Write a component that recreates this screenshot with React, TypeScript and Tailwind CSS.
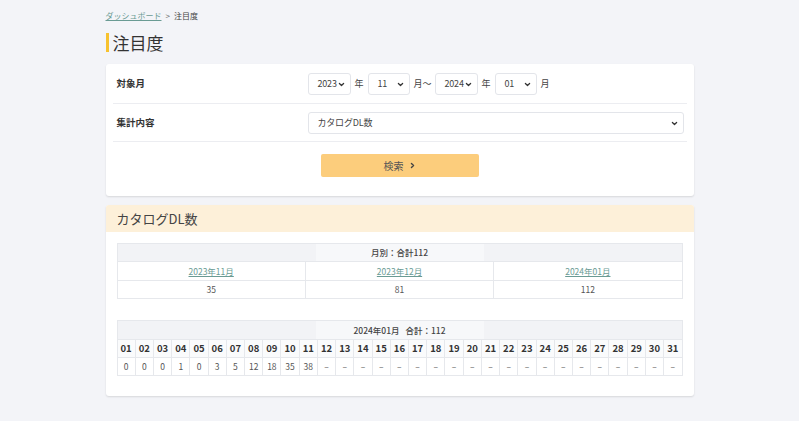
import React from 'react';

const days = Array.from({ length: 31 }, (_, i) => String(i + 1).padStart(2, '0'));
const values = ['0', '0', '0', '1', '0', '3', '5', '12', '18', '35', '38'];

function Chevron({ className = '' }: { className?: string }) {
  return (
    <svg viewBox="0 0 10 10" className={`pointer-events-none absolute w-[7px] h-[7px] ${className}`}>
      <path d="M2 3.5 L5 6.5 L8 3.5" fill="none" stroke="#333" strokeWidth="1.8" strokeLinecap="round" strokeLinejoin="round" />
    </svg>
  );
}

function Select({ value, className = '' }: { value: string; className?: string }) {
  return (
    <div className={`relative shrink-0 h-[22px] rounded-[3px] border border-[#e3e5ea] bg-white flex items-center pl-[9px] text-[9px] tracking-[-0.2px] text-[#444] ${className}`}>
      <span>{value}</span>
      <Chevron className="right-[5px] top-[7px]" />
    </div>
  );
}

export default function App() {
  return (
    <div className="min-h-[421px] bg-[#f3f4f8] text-[#333]" style={{ fontFamily: '"Noto Sans CJK JP", "Noto Sans", sans-serif' }}>
      <div className="mx-auto w-[588px] pt-[9px] pb-[26px]">
        {/* Breadcrumb */}
        <div className="text-[8px] leading-[14px] flex items-center gap-[4px]">
          <a className="text-[#6a9b94] underline">ダッシュボード</a>
          <span className="text-[#666]">&gt;</span>
          <span className="text-[#444]">注目度</span>
        </div>

        {/* Title */}
        <div className="mt-[9px] flex items-center h-[20px]">
          <div className="w-[3px] h-[19px] bg-[#f7c22f]" />
          <h1 className="ml-[4px] text-[17px] leading-none text-[#333]">注目度</h1>
        </div>

        {/* Search card */}
        <div className="mt-[12px] bg-white rounded-[3px] shadow-[0_1px_2px_rgba(0,0,0,0.12)] px-[7px] pb-[19px]">
          <div className="flex items-center h-[40px] border-b border-[#ecedf1]">
            <div className="w-[195px] shrink-0 pl-[4px] text-[9.5px] font-bold">対象月</div>
            <div className="flex items-center text-[9px] text-[#444]">
              <Select value="2023" className="w-[43px]" />
              <span className="ml-[4px] mr-[4px]">年</span>
              <Select value="11" className="w-[42px]" />
              <span className="ml-[4px] mr-[3px]">月〜</span>
              <Select value="2024" className="w-[43px]" />
              <span className="ml-[4px] mr-[4px]">年</span>
              <Select value="01" className="w-[42px]" />
              <span className="ml-[4px]">月</span>
            </div>
          </div>
          <div className="flex items-center h-[38px] border-b border-[#ecedf1]">
            <div className="w-[195px] shrink-0 pl-[4px] text-[9.5px] font-bold">集計内容</div>
            <Select value="カタログDL数" className="w-[376px] h-[21px]" />
          </div>
          <div className="pt-[12px] pl-[208px]">
            <button className="w-[158px] h-[23px] rounded-[2px] bg-[#fccd7c] flex items-center justify-center gap-[5px] text-[10px] text-[#555]">
              <span>検索</span>
              <svg viewBox="0 0 10 10" className="w-[7px] h-[7px]">
                <path d="M3.5 2 L6.5 5 L3.5 8" fill="none" stroke="#444" strokeWidth="2" strokeLinecap="round" strokeLinejoin="round" />
              </svg>
            </button>
          </div>
        </div>

        {/* Result card */}
        <div className="mt-[9px] bg-white rounded-[3px] shadow-[0_1px_2px_rgba(0,0,0,0.12)] overflow-hidden">
          <div className="h-[27px] bg-[#fdf0d9] flex items-center pl-[11px] text-[13px] text-[#444]">カタログDL数</div>
          <div className="px-[11px] pt-[11px] pb-[20px]">
            <table className="w-full border-collapse text-[8.5px] text-[#555]">
              <thead>
                <tr>
                  <th colSpan={3} className="h-[18px] bg-[#f2f3f6] border border-[#e6e8ec] p-0">
                    <div className="mx-auto w-[168px] h-[17px] bg-[#f7f8fa] flex items-center justify-center font-medium text-[#444]">月別：合計112</div>
                  </th>
                </tr>
              </thead>
              <tbody>
                <tr className="h-[19px]">
                  {['2023年11月', '2023年12月', '2024年01月'].map((m) => (
                    <td key={m} className="w-1/3 border border-[#e6e8ec] text-center p-0">
                      <a className="text-[#6a9b94] underline">{m}</a>
                    </td>
                  ))}
                </tr>
                <tr className="h-[18px]">
                  {['35', '81', '112'].map((v) => (
                    <td key={v} className="border border-[#e6e8ec] text-center p-0">{v}</td>
                  ))}
                </tr>
              </tbody>
            </table>

            <table className="mt-[21px] w-full border-collapse table-fixed text-[8.5px] text-[#555]">
              <thead>
                <tr>
                  <th colSpan={31} className="h-[19px] bg-[#f2f3f6] border border-[#e6e8ec] p-0">
                    <div className="mx-auto w-[168px] h-[18px] bg-[#f7f8fa] flex items-center justify-center font-medium text-[#444] gap-[6px]">
                      <span>2024年01月</span>
                      <span>合計：112</span>
                    </div>
                  </th>
                </tr>
              </thead>
              <tbody>
                <tr className="h-[18px]">
                  {days.map((d) => (
                    <td key={d} className="border border-[#e6e8ec] text-center p-0 font-bold text-[9.5px] text-[#333] bg-[#fafbfc]">{d}</td>
                  ))}
                </tr>
                <tr className="h-[18px]">
                  {days.map((d, i) => (
                    <td key={d} className="border border-[#e6e8ec] text-center p-0">{values[i] ?? '–'}</td>
                  ))}
                </tr>
              </tbody>
            </table>
          </div>
        </div>
      </div>
    </div>
  );
}
